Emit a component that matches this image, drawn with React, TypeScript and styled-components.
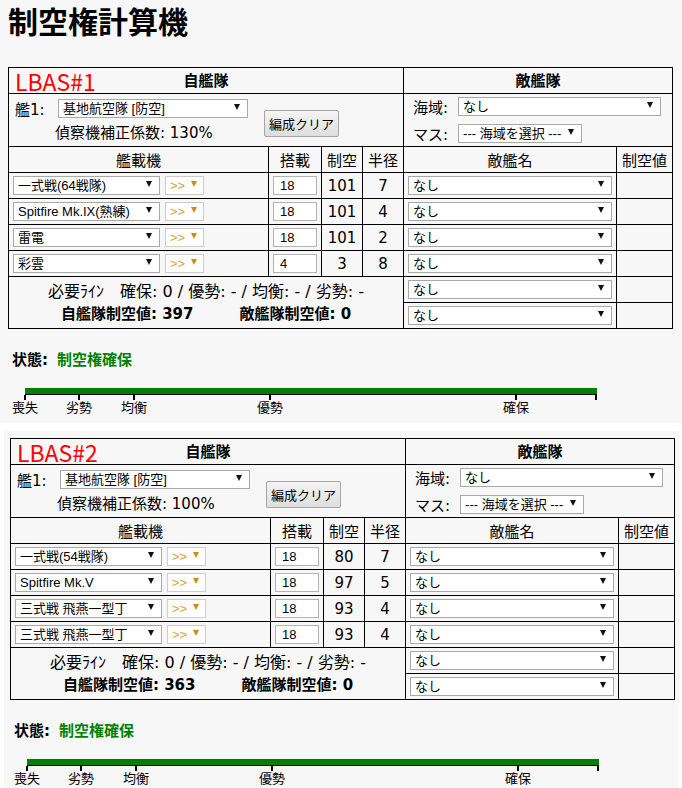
import styled, { createGlobalStyle } from "styled-components";

const GlobalStyle = createGlobalStyle`
  body {
    margin: 0;
    background: #fff;
    font-family: "DejaVu Sans", "Noto Sans CJK JP", sans-serif;
    color: #000;
  }
`;

type Slot = { plane: string; count: number; air: number; radius: number };
type Fleet = {
  id: number;
  recon: string;
  own: number;
  enemy: number;
  slots: Slot[];
};

const fleets: Fleet[] = [
  {
    id: 1,
    recon: "130%",
    own: 397,
    enemy: 0,
    slots: [
      { plane: "一式戦(64戦隊)", count: 18, air: 101, radius: 7 },
      { plane: "Spitfire Mk.IX(熟練)", count: 18, air: 101, radius: 4 },
      { plane: "雷電", count: 18, air: 101, radius: 2 },
      { plane: "彩雲", count: 4, air: 3, radius: 8 },
    ],
  },
  {
    id: 2,
    recon: "100%",
    own: 363,
    enemy: 0,
    slots: [
      { plane: "一式戦(54戦隊)", count: 18, air: 80, radius: 7 },
      { plane: "Spitfire Mk.V", count: 18, air: 97, radius: 5 },
      { plane: "三式戦 飛燕一型丁", count: 18, air: 93, radius: 4 },
      { plane: "三式戦 飛燕一型丁", count: 18, air: 93, radius: 4 },
    ],
  },
];

// tick offsets on the air-state scale (px from bar start)
const ticks = [
  { at: 0, label: "喪失" },
  { at: 54, label: "劣勢" },
  { at: 109, label: "均衡" },
  { at: 245, label: "優勢" },
  { at: 491, label: "確保" },
  { at: 571, label: "" },
];

function Select({
  value,
  width,
  accent,
}: {
  value: string;
  width: number;
  accent?: boolean;
}) {
  return (
    <SelectWrap $w={width} $accent={accent}>
      <NativeSelect $accent={accent} defaultValue={value}>
        <option>{value}</option>
      </NativeSelect>
    </SelectWrap>
  );
}

function FleetPanel({ fleet, first }: { fleet: Fleet; first?: boolean }) {
  return (
    <Panel $first={first}>
      {first && <Title>制空権計算機</Title>}
      <Table>
        <colgroup>
          <col style={{ width: 260 }} />
          <col style={{ width: 53 }} />
          <col style={{ width: 41 }} />
          <col style={{ width: 41 }} />
          <col style={{ width: 213 }} />
          <col style={{ width: 56 }} />
        </colgroup>
        <tbody>
          <Row $h={26}>
            <HeadCell colSpan={4}>
              <HeadInner>
                <LbasName>LBAS#{fleet.id}</LbasName>
                <span>自艦隊</span>
              </HeadInner>
            </HeadCell>
            <HeadCell colSpan={2}>敵艦隊</HeadCell>
          </Row>
          <Row $h={53}>
            <Cell colSpan={4} $pad="0 6px">
              <ShipConfig>
                <ConfigLines>
                  <ConfigLine>
                    <FieldLabel>艦1:</FieldLabel>
                    <Select value="基地航空隊 [防空]" width={190} />
                  </ConfigLine>
                  <ReconLine>偵察機補正係数: {fleet.recon}</ReconLine>
                </ConfigLines>
                <ClearButton type="button">編成クリア</ClearButton>
              </ShipConfig>
            </Cell>
            <Cell colSpan={2} $pad="0 9px">
              <AreaGrid>
                <span>海域:</span>
                <Select value="なし" width={203} />
                <span>マス:</span>
                <Select value="--- 海域を選択 ---" width={124} />
              </AreaGrid>
            </Cell>
          </Row>
          <Row $h={26}>
            <ColHead>艦載機</ColHead>
            <ColHead>搭載</ColHead>
            <ColHead>制空</ColHead>
            <ColHead>半径</ColHead>
            <ColHead>敵艦名</ColHead>
            <ColHead>制空値</ColHead>
          </Row>
          {fleet.slots.map((slot, i) => (
            <Row $h={26} key={i}>
              <Cell>
                <PlaneSlot>
                  <Select value={slot.plane} width={147} />
                  <Select value=">>" width={39} accent />
                </PlaneSlot>
              </Cell>
              <Cell>
                <CountInput defaultValue={slot.count} />
              </Cell>
              <NumCell>{slot.air}</NumCell>
              <NumCell>{slot.radius}</NumCell>
              <Cell>
                <Select value="なし" width={204} />
              </Cell>
              <Cell />
            </Row>
          ))}
          <Row $h={26}>
            <Cell colSpan={4} rowSpan={2}>
              <Summary>
                <RequiredLine>
                  必要ﾗｲﾝ　確保: 0 / 優勢: - / 均衡: - / 劣勢: -
                </RequiredLine>
                <Totals>
                  <span>自艦隊制空値: {fleet.own}</span>
                  <span>敵艦隊制空値: {fleet.enemy}</span>
                </Totals>
              </Summary>
            </Cell>
            <Cell>
              <Select value="なし" width={204} />
            </Cell>
            <Cell />
          </Row>
          <Row $h={26}>
            <Cell>
              <Select value="なし" width={204} />
            </Cell>
            <Cell />
          </Row>
        </tbody>
      </Table>
      <Status>
        状態:<StatusValue>制空権確保</StatusValue>
      </Status>
      <Scale>
        <Bar />
        {ticks.map((t) => (
          <Tick key={t.at} style={{ left: t.at }} />
        ))}
        {ticks
          .filter((t) => t.label)
          .map((t) => (
            <TickLabel key={t.at} style={{ left: t.at }}>
              {t.label}
            </TickLabel>
          ))}
      </Scale>
    </Panel>
  );
}

export default function App() {
  return (
    <>
      <GlobalStyle />
      <FleetPanel fleet={fleets[0]} first />
      <FleetPanel fleet={fleets[1]} />
    </>
  );
}

const Panel = styled.section<{ $first?: boolean }>`
  box-sizing: border-box;
  background: #f7f7f7;
  width: ${(p) => (p.$first ? "682px" : "675px")};
  margin: ${(p) => (p.$first ? "0" : "8px 0 0 4px")};
  padding: ${(p) => (p.$first ? "0 8px 9px 8px" : "7px 5px 4px 6px")};
`;

const Title = styled.h1`
  margin: 0;
  padding-top: 2px;
  height: 65px;
  font-family: "Noto Sans CJK JP", sans-serif;
  font-size: 30px;
  font-weight: 700;
  line-height: 36px;
`;

const Table = styled.table`
  border-collapse: collapse;
  table-layout: fixed;
  width: 664px;
  font-size: 15px;
  border: 1px solid #000;
`;

const Row = styled.tr<{ $h: number }>`
  height: ${(p) => p.$h}px;
`;

const HeadCell = styled.th`
  border: 1px solid #000;
  padding: 0 6px;
  font-size: 15px;
  font-weight: 700;
  line-height: 24px;
  text-align: center;
`;

const HeadInner = styled.div`
  display: grid;
  grid-template-columns: 1fr auto 1fr;
  align-items: center;
`;

const LbasName = styled.span`
  justify-self: start;
  font-family: "Noto Sans CJK JP", sans-serif;
  font-size: 23px;
  font-weight: 400;
  line-height: 24px;
  color: #f00;
`;

const ColHead = styled.th`
  border: 1px solid #000;
  padding: 0;
  font-weight: 400;
  text-align: center;
`;

const Cell = styled.td<{ $pad?: string }>`
  border: 1px solid #000;
  padding: ${(p) => p.$pad ?? "0 4px"};
  vertical-align: middle;
`;

const NumCell = styled(Cell)`
  padding: 0;
  text-align: center;
`;

const ShipConfig = styled.div`
  display: flex;
  align-items: center;
`;

const ConfigLines = styled.div`
  display: flex;
  flex-direction: column;
  gap: 5px;
`;

const ConfigLine = styled.div`
  display: flex;
  align-items: center;
`;

const FieldLabel = styled.span`
  width: 43px;
`;

const ReconLine = styled.div`
  padding-left: 40px;
  line-height: 18px;
`;

const ClearButton = styled.button`
  margin: 6px 0 0 16px;
  height: 27px;
  width: 75px;
  padding: 0;
  border: 1px solid #a6a6a6;
  border-radius: 2px;
  background: linear-gradient(#f4f4f4, #dedede);
  font-family: "Noto Sans CJK JP", sans-serif;
  font-size: 13px;
  color: #000;
`;

const AreaGrid = styled.div`
  display: grid;
  grid-template-columns: 45px auto;
  row-gap: 6px;
  align-items: center;
  justify-items: start;
`;

const SelectWrap = styled.span<{ $w: number; $accent?: boolean }>`
  position: relative;
  display: inline-block;
  width: ${(p) => p.$w}px;
  height: 19px;
  vertical-align: middle;

  &::after {
    content: "";
    position: absolute;
    right: ${(p) => (p.$accent ? 7 : 8)}px;
    top: 5px;
    border-left: 3px solid transparent;
    border-right: 3px solid transparent;
    border-top: 6px solid ${(p) => (p.$accent ? "#d08c12" : "#111")};
    pointer-events: none;
  }
`;

const NativeSelect = styled.select<{ $accent?: boolean }>`
  appearance: none;
  box-sizing: border-box;
  width: 100%;
  height: 100%;
  margin: 0;
  padding: 0 14px 0 4px;
  border: 1px solid ${(p) => (p.$accent ? "#cdcdcd" : "#a9a9a9")};
  border-radius: 0;
  background: #fff;
  font-family: "Liberation Sans", "Noto Sans CJK JP", sans-serif;
  font-size: 13px;
  color: ${(p) => (p.$accent ? "#e3a033" : "#000")};
`;

const PlaneSlot = styled.div`
  display: flex;
  align-items: center;
  gap: 5px;
`;

const CountInput = styled.input`
  box-sizing: border-box;
  width: 44px;
  height: 19px;
  margin: 0;
  padding: 0 6px;
  border: 1px solid #b4b4b4;
  background: #fff;
  font-family: "Liberation Sans", sans-serif;
  font-size: 13px;
  vertical-align: middle;
`;

const Summary = styled.div`
  display: flex;
  flex-direction: column;
  align-items: center;
  line-height: 23px;
`;

const RequiredLine = styled.div`
  font-size: 16px;
`;

const Totals = styled.div`
  display: flex;
  gap: 46px;
  font-weight: 700;
`;

const Status = styled.div`
  margin-top: 22px;
  padding-left: 4px;
  font-size: 15px;
  font-weight: 700;
  line-height: 18px;
`;

const StatusValue = styled.span`
  margin-left: 9px;
  color: #008000;
`;

const Scale = styled.div`
  position: relative;
  width: 572px;
  height: 26px;
  margin: 19px 0 0 17px;
`;

const Bar = styled.div`
  height: 6px;
  background: #008000;
  border-bottom: 1px solid #000;
`;

const Tick = styled.span`
  position: absolute;
  top: 7px;
  width: 2px;
  height: 5px;
  margin-left: -1px;
  background: #000;
`;

const TickLabel = styled.span`
  position: absolute;
  top: 11px;
  transform: translateX(-50%);
  font-family: "Noto Sans CJK JP", sans-serif;
  font-size: 13px;
  line-height: 16px;
  white-space: nowrap;
`;
